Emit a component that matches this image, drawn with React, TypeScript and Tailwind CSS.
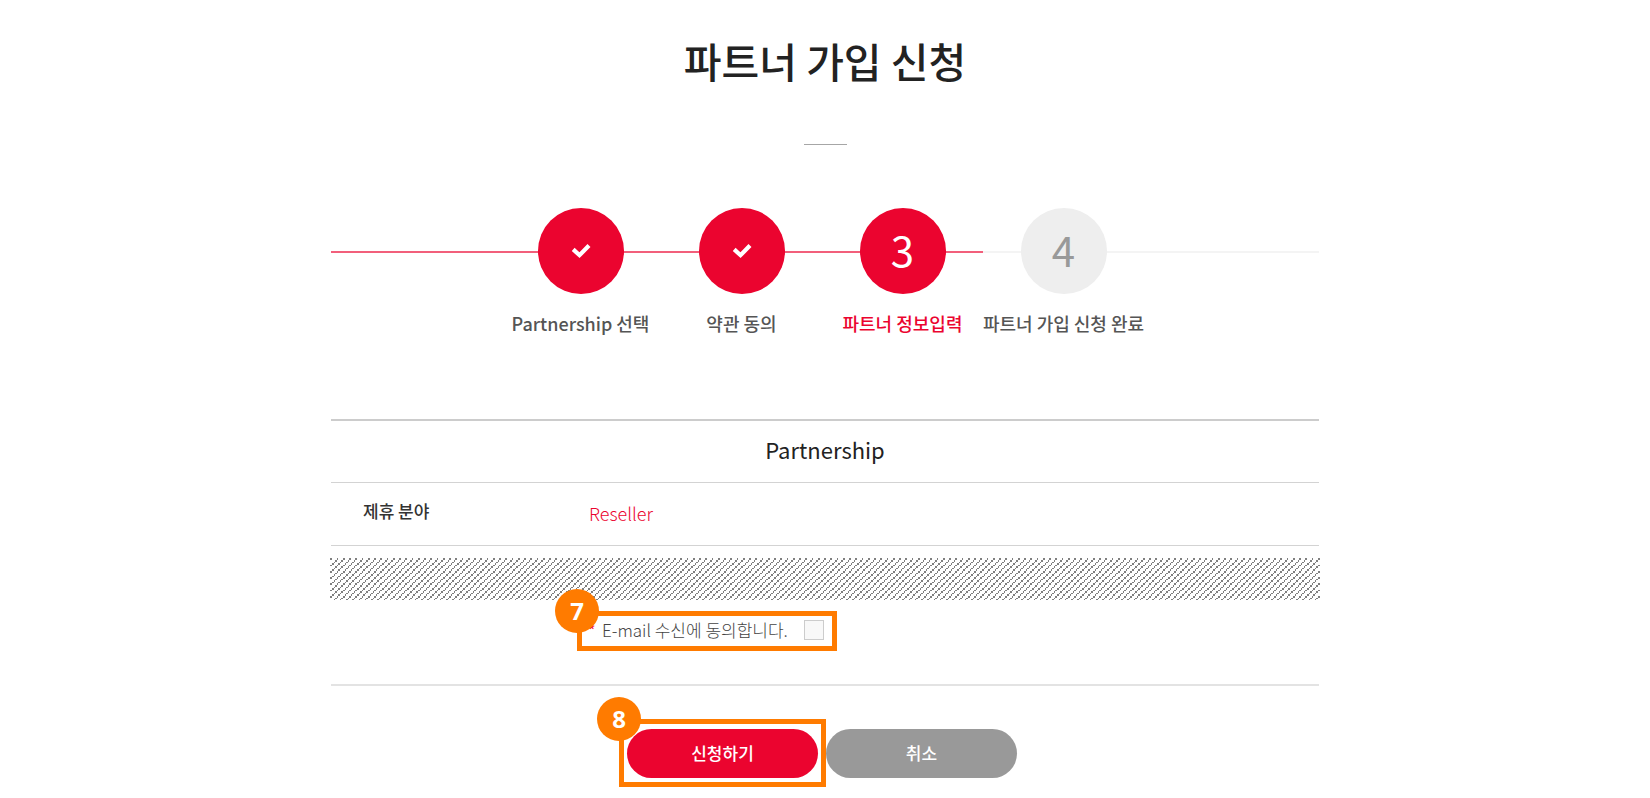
import React from "react";

const steps = [
  { label: "Partnership 선택", state: "done" },
  { label: "약관 동의", state: "done" },
  { label: "파트너 정보입력", state: "current" },
  { label: "파트너 가입 신청 완료", state: "todo" },
];

const circleStyles: Record<string, string> = {
  done: "bg-[#eb042f] text-white",
  current: "bg-[#eb042f] pb-1 text-white",
  todo: "bg-[#eeeeee] pb-1 text-[#999999]",
};

function CheckMark() {
  return (
    <svg width="20" height="16" viewBox="0 0 20 16" fill="none" aria-label="완료">
      <path d="M2.2 6.4 L8.5 12.2 L18 2.6" stroke="currentColor" strokeWidth="4.2" />
    </svg>
  );
}

// Diagonal hatch: four strokes per 25px tile, drawn on a 16-cell grid.
const TILE = 25;
const CELL = TILE / 16;
const hatchPath = Array.from({ length: TILE * TILE }, (_, i) => [i % TILE, Math.floor(i / TILE)])
  .filter(([x, y]) => (Math.floor(x / CELL) + Math.floor(y / CELL)) % 4 === 0)
  .map(([x, y]) => `M${x} ${y}h1v1h-1z`)
  .join("");

function Hatch() {
  return (
    <svg className="block h-[42px] w-full" aria-hidden="true" shapeRendering="crispEdges">
      <defs>
        <pattern id="hatch" width={TILE} height={TILE} patternUnits="userSpaceOnUse">
          <path d={hatchPath} fill="#7f7f7f" />
        </pattern>
      </defs>
      <rect width="100%" height="100%" fill="url(#hatch)" />
    </svg>
  );
}

function Callout({ number, className, children }: { number: number; className: string; children: React.ReactNode }) {
  return (
    <div className={`relative border-[5px] border-[#ff7b00] ${className}`}>
      <span className="absolute -top-[27px] -left-[27px] z-10 flex size-11 items-center justify-center rounded-full bg-[#ff7b00] font-['Open_Sans',sans-serif] text-2xl leading-none font-bold text-white">
        {number}
      </span>
      {children}
    </div>
  );
}

export default function App() {
  return (
    <main className="mx-auto max-w-[988px] font-['Noto_Sans_CJK_KR',sans-serif] text-[#222222]">
      <header className="flex flex-col items-center pt-[30px]">
        <h1 className="text-[41px] leading-[60px] font-medium">파트너 가입 신청</h1>
        <hr className="mt-[54px] w-[43px] border-[#a6a6a6]" />
      </header>

      <section className="relative mt-[63px]">
        <div className="absolute inset-x-0 top-[43px] flex h-0.5">
          <span className="w-[66%] bg-[#f25f7b]" />
          <span className="flex-1 bg-[#f4f4f4]" />
        </div>
        <ol className="relative mx-auto flex w-[650px] pr-1.5">
          {steps.map((step, i) => (
            <li key={step.label} className="flex w-[161px] flex-col items-center">
              <span
                className={`flex size-[86px] items-center justify-center rounded-full text-[42px] leading-none ${circleStyles[step.state]}`}
              >
                {step.state === "done" ? <CheckMark /> : i + 1}
              </span>
              <span
                className={`mt-[15px] text-lg leading-7 font-medium whitespace-nowrap ${
                  step.state === "current" ? "text-[#eb042f]" : "text-[#555555]"
                }`}
              >
                {step.label}
              </span>
            </li>
          ))}
        </ol>
      </section>

      <form className="mt-[82px]">
        <section className="border-t-2 border-[#cccccc]">
          <h2 className="flex h-[62px] items-center justify-center border-b border-[#d3d3d3] pb-1 text-[22px]">
            Partnership
          </h2>
          <dl className="flex h-[63px] items-center border-b border-[#d3d3d3] pb-0.5 pl-8">
            <dt className="w-[226px] pb-1 text-[17px] font-medium text-[#333333]">제휴 분야</dt>
            <dd className="text-lg font-light text-[#eb042f]">Reseller</dd>
          </dl>
        </section>

        <div className="-mx-px mt-3">
          <Hatch />
        </div>

        <div className="border-b-2 border-[#e3e3e3] pt-[11px] pb-[33px] pl-[246px]">
          <Callout number={7} className="flex h-10 w-[260px] items-center pb-0.5">
            <span className="w-5 pl-1.5 text-base text-[#eb042f]">*</span>
            <label htmlFor="mail" className="text-[17px] font-light text-[#444444]">
              E-mail 수신에 동의합니다.
            </label>
            <input
              id="mail"
              type="checkbox"
              className="mr-2 ml-auto size-5 appearance-none border border-[#cccccc] bg-[#f8f8f8]"
            />
          </Callout>
        </div>

        <div className="mt-[33px] flex items-center pl-[288px]">
          <Callout number={8} className="flex h-[68px] w-[207px] items-center justify-center">
            <button
              type="button"
              className="h-[49px] w-[191px] rounded-full bg-[#eb042f] pb-px text-[17px] font-medium text-white"
            >
              신청하기
            </button>
          </Callout>
          <button
            type="button"
            className="h-[49px] w-[191px] rounded-full bg-[#999999] pb-px text-[17px] font-medium text-white"
          >
            취소
          </button>
        </div>
      </form>
    </main>
  );
}
